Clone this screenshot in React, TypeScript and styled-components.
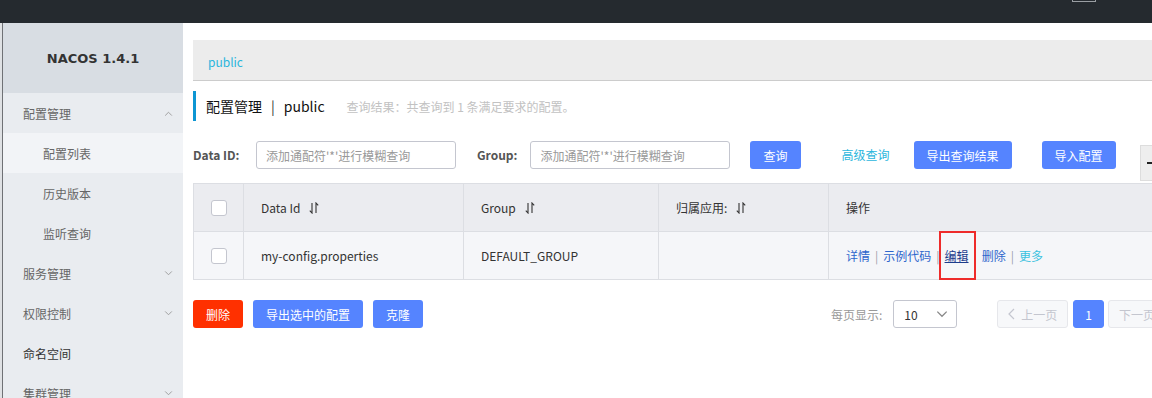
import React from 'react';
import styled, { createGlobalStyle } from 'styled-components';

const GlobalStyle = createGlobalStyle`
  html, body {
    margin: 0;
    padding: 0;
  }
  body {
    width: 1152px;
    height: 398px;
    overflow: hidden;
    background: #fff;
    font-family: "Noto Sans CJK SC", "Noto Sans", sans-serif;
    font-size: 12px;
    color: #333;
  }
`;

const Page = styled.div`
  width: 1152px;
  height: 398px;
  display: flex;
  flex-direction: column;
  overflow: hidden;
`;

const TopBar = styled.div`
  height: 23px;
  flex-shrink: 0;
  background: #252a2f;
  display: flex;
  justify-content: flex-end;
  padding-right: 56px;
`;

const TopButtonEdge = styled.div`
  width: 22px;
  height: 1px;
  border: 1px solid #9a9ea3;
  border-top: none;
`;

const Frame = styled.div`
  flex: 1;
  display: flex;
  min-height: 0;
`;

const WindowEdge = styled.div`
  width: 2px;
  background: #dfe1e4;
  border-right: 1px solid #6f7175;
`;

const Sidebar = styled.div`
  width: 180px;
  flex-shrink: 0;
  background: #e9ecf0;
  display: flex;
  flex-direction: column;
`;

const Logo = styled.div`
  height: 70px;
  flex-shrink: 0;
  background: #d8dde3;
  display: flex;
  align-items: center;
  justify-content: center;
  font-family: "DejaVu Sans", sans-serif;
  font-weight: bold;
  font-size: 13px;
  color: #333;
`;

const MenuItem = styled.div<{ $sub?: boolean; $active?: boolean; $strong?: boolean }>`
  height: 40px;
  flex-shrink: 0;
  display: flex;
  align-items: center;
  justify-content: space-between;
  padding-left: ${(p) => (p.$sub ? 40 : 20)}px;
  padding-right: 10px;
  background: ${(p) => (p.$active ? '#f2f4f7' : 'transparent')};
  color: ${(p) => (p.$strong ? '#333' : '#666')};
  font-size: 12px;
`;

const Main = styled.div`
  flex: 1;
  min-width: 0;
  padding-left: 10px;
  overflow: hidden;
`;

const Content = styled.div`
  width: 986px;
`;

const Breadcrumb = styled.div`
  margin-top: 17px;
  height: 41px;
  box-sizing: border-box;
  padding: 3px 0 0 15px;
  background: #ececec;
  border-bottom: 1px solid #cccccc;
  display: flex;
  align-items: center;
  color: #2bb6dd;
  font-size: 12px;
`;

const TitleRow = styled.div`
  margin-top: 10px;
  height: 30px;
  border-left: 3px solid #0d96d3;
  padding-left: 10px;
  display: flex;
  align-items: center;
`;

const TitleText = styled.span`
  font-size: 14px;
  color: #111;
`;

const TitleSep = styled.span`
  margin: 0 9px;
  font-size: 14px;
  color: #333;
`;

const Summary = styled.span`
  margin-left: 22px;
  font-size: 12px;
  color: #c2c2c2;
`;

const SearchRow = styled.div`
  margin-top: 20px;
  height: 28px;
  display: flex;
  align-items: flex-start;
`;

const Label = styled.span<{ $ml?: number; $w: number }>`
  margin-left: ${(p) => p.$ml ?? 0}px;
  margin-right: 13px;
  min-width: ${(p) => p.$w}px;
  line-height: 28px;
  font-weight: bold;
  font-size: 12px;
  color: #555;
  white-space: nowrap;
  flex-shrink: 0;
`;

const Input = styled.input`
  width: 200px;
  height: 28px;
  flex-shrink: 0;
  box-sizing: border-box;
  border: 1px solid #c4c6cf;
  border-radius: 3px;
  padding: 0 9px;
  font-family: inherit;
  font-size: 12px;
  outline: none;
  &::placeholder {
    color: #999;
  }
`;

const Button = styled.button<{ $ml?: number; $danger?: boolean }>`
  margin-left: ${(p) => p.$ml ?? 0}px;
  height: 28px;
  padding: 0 13px;
  border: none;
  border-radius: 3px;
  background: ${(p) => (p.$danger ? '#ff3000' : '#5584ff')};
  color: #fff;
  font-family: inherit;
  font-size: 12px;
  white-space: nowrap;
  flex-shrink: 0;
`;

const LinkText = styled.span<{ $ml?: number }>`
  margin-left: ${(p) => p.$ml ?? 0}px;
  line-height: 28px;
  color: #2bb6dd;
  white-space: nowrap;
  flex-shrink: 0;
`;

const GreyToggle = styled.div`
  margin: 4px 0 0 24px;
  width: 40px;
  height: 36px;
  box-sizing: border-box;
  background: #eeeeee;
  border: 1px solid #dddddd;
  display: flex;
  align-items: center;
  padding-left: 6px;
  flex-shrink: 0;
  &::before {
    content: '';
    width: 10px;
    height: 2px;
    background: #222;
  }
`;

const Table = styled.div`
  margin-top: 14px;
  width: 100%;
  border-top: 1px solid #dcdee3;
  border-bottom: 1px solid #dcdee3;
`;

const TableRow = styled.div<{ $head?: boolean }>`
  display: grid;
  grid-template-columns: 50px 220px 195px 170px 1fr;
  height: 47px;
  background: ${(p) => (p.$head ? '#ebecf0' : '#f5f6f9')};
  & + & {
    border-top: 1px solid #dcdee3;
  }
`;

const Cell = styled.div<{ $center?: boolean }>`
  position: relative;
  display: flex;
  align-items: center;
  justify-content: ${(p) => (p.$center ? 'center' : 'flex-start')};
  padding-left: ${(p) => (p.$center ? 0 : 17)}px;
  border-left: 1px solid #dcdee3;
  color: #333;
  font-size: 12px;
  white-space: nowrap;
`;

const Checkbox = styled.span`
  width: 16px;
  height: 16px;
  box-sizing: border-box;
  border: 1px solid #c4c6cf;
  border-radius: 3px;
  background: #fff;
`;

const SortIcon = styled.svg`
  margin-left: 9px;
  width: 10px;
  height: 12px;
`;

const Action = styled.span<{ $tone?: 'link' | 'edit' | 'more' }>`
  color: ${(p) => (p.$tone === 'edit' ? '#1c3c8c' : p.$tone === 'more' ? '#3cc2e0' : '#2e66cc')};
  text-decoration: ${(p) => (p.$tone === 'edit' ? 'underline' : 'none')};
`;

const ActionSep = styled.span`
  margin: 0 5px;
  color: #9aa0aa;
`;

const Highlight = styled.div`
  position: absolute;
  left: 110px;
  top: -1px;
  width: 37px;
  height: 49px;
  box-sizing: border-box;
  border: 2px solid #ee2b2b;
`;

const Footer = styled.div`
  margin-top: 20px;
  height: 28px;
  display: flex;
  justify-content: space-between;
`;

const Group = styled.div`
  display: flex;
  align-items: center;
`;

const PageSizeLabel = styled.span`
  color: #999;
  margin-right: 11px;
`;

const Select = styled.div`
  width: 64px;
  height: 28px;
  box-sizing: border-box;
  border: 1px solid #c4c6cf;
  border-radius: 3px;
  display: flex;
  align-items: center;
  justify-content: space-between;
  padding: 0 8px 0 10px;
  color: #333;
  margin-right: 40px;
`;

const PageButton = styled.div<{ $current?: boolean; $ml?: number }>`
  margin-left: ${(p) => p.$ml ?? 0}px;
  height: 28px;
  box-sizing: border-box;
  padding: 0 ${(p) => (p.$current ? 11 : 10)}px;
  border-radius: 3px;
  border: 1px solid ${(p) => (p.$current ? '#5584ff' : '#e6e7eb')};
  background: ${(p) => (p.$current ? '#5584ff' : '#f7f8fa')};
  color: ${(p) => (p.$current ? '#fff' : '#c4c6cf')};
  display: flex;
  align-items: center;
  gap: 6px;
  white-space: nowrap;
`;

const Chevron = ({ up, color = '#999', size = 9 }: { up?: boolean; color?: string; size?: number }) => (
  <svg width={size} height={Math.round(size * 0.6)} viewBox="0 0 10 6" fill="none">
    <path d={up ? 'M1 5.5 L5 1.5 L9 5.5' : 'M1 0.5 L5 4.5 L9 0.5'} stroke={color} strokeWidth="1.1" />
  </svg>
);

const SideChevron = ({ left, color }: { left?: boolean; color: string }) => (
  <svg width="7" height="12" viewBox="0 0 7 12" fill="none">
    <path d={left ? 'M6 1 L1 6 L6 11' : 'M1 1 L6 6 L1 11'} stroke={color} strokeWidth="1.2" />
  </svg>
);

const Sort = () => (
  <SortIcon viewBox="0 0 10 12" fill="none">
    <path d="M3 1 V11 L0.8 8.6" stroke="#333" strokeWidth="1.1" />
    <path d="M7 11 V1 L9.2 3.4" stroke="#333" strokeWidth="1.1" />
  </SortIcon>
);

const menu = [
  { label: '配置管理', chevron: 'up' },
  { label: '配置列表', sub: true, active: true },
  { label: '历史版本', sub: true },
  { label: '监听查询', sub: true },
  { label: '服务管理', chevron: 'down' },
  { label: '权限控制', chevron: 'down' },
  { label: '命名空间', strong: true },
  { label: '集群管理', chevron: 'down' },
];

export default function App() {
  return (
    <Page>
      <GlobalStyle />
      <TopBar>
        <TopButtonEdge />
      </TopBar>
      <Frame>
        <WindowEdge />
        <Sidebar>
          <Logo>NACOS 1.4.1</Logo>
          {menu.map((m) => (
            <MenuItem key={m.label} $sub={m.sub} $active={m.active} $strong={m.strong}>
              <span>{m.label}</span>
              {m.chevron && <Chevron up={m.chevron === 'up'} />}
            </MenuItem>
          ))}
        </Sidebar>
        <Main>
          <Content>
            <Breadcrumb>public</Breadcrumb>
            <TitleRow>
              <TitleText>配置管理</TitleText>
              <TitleSep>|</TitleSep>
              <TitleText>public</TitleText>
              <Summary>查询结果：共查询到 1 条满足要求的配置。</Summary>
            </TitleRow>
            <SearchRow>
              <Label $w={50}>Data ID:</Label>
              <Input placeholder="添加通配符'*'进行模糊查询" />
              <Label $ml={21} $w={39}>Group:</Label>
              <Input placeholder="添加通配符'*'进行模糊查询" />
              <Button $ml={20}>查询</Button>
              <LinkText $ml={41}>高级查询</LinkText>
              <Button $ml={24}>导出查询结果</Button>
              <Button $ml={30}>导入配置</Button>
              <GreyToggle />
            </SearchRow>
            <Table>
              <TableRow $head>
                <Cell $center>
                  <Checkbox />
                </Cell>
                <Cell>
                  Data Id
                  <Sort />
                </Cell>
                <Cell>
                  Group
                  <Sort />
                </Cell>
                <Cell>
                  归属应用:
                  <Sort />
                </Cell>
                <Cell>操作</Cell>
              </TableRow>
              <TableRow>
                <Cell $center>
                  <Checkbox />
                </Cell>
                <Cell>my-config.properties</Cell>
                <Cell>DEFAULT_GROUP</Cell>
                <Cell />
                <Cell>
                  <Action>详情</Action>
                  <ActionSep>|</ActionSep>
                  <Action>示例代码</Action>
                  <ActionSep>|</ActionSep>
                  <Action $tone="edit">编辑</Action>
                  <ActionSep>|</ActionSep>
                  <Action>删除</Action>
                  <ActionSep>|</ActionSep>
                  <Action $tone="more">更多</Action>
                  <Highlight />
                </Cell>
              </TableRow>
            </Table>
            <Footer>
              <Group>
                <Button $danger>删除</Button>
                <Button $ml={10}>导出选中的配置</Button>
                <Button $ml={10}>克隆</Button>
              </Group>
              <Group>
                <PageSizeLabel>每页显示:</PageSizeLabel>
                <Select>
                  <span>10</span>
                  <Chevron color="#888" size={12} />
                </Select>
                <PageButton>
                  <SideChevron left color="#c4c6cf" />
                  <span>上一页</span>
                </PageButton>
                <PageButton $current $ml={5}>1</PageButton>
                <PageButton $ml={4}>
                  <span>下一页</span>
                  <SideChevron color="#c4c6cf" />
                </PageButton>
              </Group>
            </Footer>
          </Content>
        </Main>
      </Frame>
    </Page>
  );
}
